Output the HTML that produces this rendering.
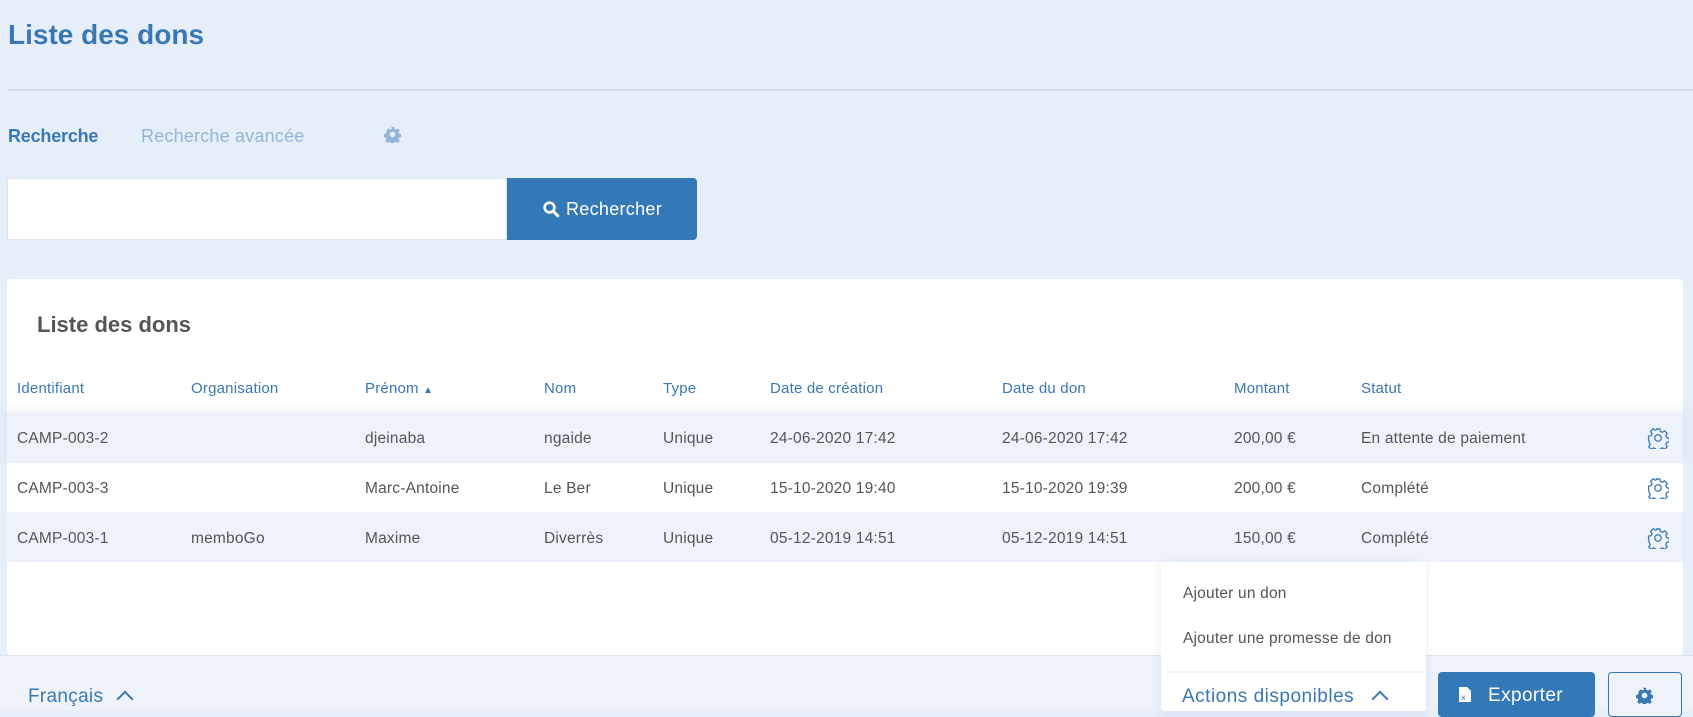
<!DOCTYPE html>
<html><head><meta charset="utf-8"><style>
*{box-sizing:border-box;margin:0;padding:0}
body{width:1693px;height:711px;overflow:hidden;background:#e6eef9;font-family:"Liberation Sans",sans-serif;position:relative;color:#555}
.a{position:absolute;white-space:nowrap}
h1{position:absolute;left:8px;top:19px;font-size:28px;font-weight:bold;color:#3a78b5;letter-spacing:0px}
.hr{position:absolute;left:8px;right:0;top:89px;height:2px;background:#d5dde8}
.tab{font-size:18px;top:126px}
.inp{left:7px;top:178px;width:500px;height:62px;background:#fff;border:1px solid #dde4ee}
.btn{left:507px;top:178px;width:190px;height:62px;background:#3379b7;border-radius:0 4px 4px 0;color:#fff;font-size:18px;display:flex;align-items:center;justify-content:center;gap:6px;letter-spacing:.3px}
.card{left:7px;top:279px;width:1676px;height:376px;background:#fff;border-radius:4px}
.th{top:380px;font-size:15px;color:#3a78b5;letter-spacing:.2px}
.row{position:absolute;left:7px;width:1676px;height:50px}
.td{font-size:15.5px;color:#555;letter-spacing:.2px}
.foot{left:0;top:655px;width:1693px;height:56px;background:#eef3fa;border-top:1px solid #dde4ee}
</style></head><body>
<h1>Liste des dons</h1>
<div class="hr"></div>
<div class="a tab" style="left:8px;color:#3a78b5;font-weight:bold;letter-spacing:-0.2px">Recherche</div>
<div class="a tab" style="left:141px;color:#93b5d9;letter-spacing:.2px">Recherche avancée</div>
<svg class="a" style="left:384px;top:126px" width="17" height="17" viewBox="0 0 24 24"><path fill="#93b5d9" d="M10 1h4l.6 3 2.3 1 2.6-1.7 2.8 2.8-1.7 2.6 1 2.3 3 .6v4l-3 .6-1 2.3 1.7 2.6-2.8 2.8-2.6-1.7-2.3 1-.6 3h-4l-.6-3-2.3-1-2.6 1.7-2.8-2.8 1.7-2.6-1-2.300-3-.6v-4l3-.6 1-2.3L3.7 6.1l2.8-2.8 2.6 1.7 2.3-1zM12 8a4 4 0 100 8 4 4 0 000-8z"/></svg>
<div class="a inp"></div>
<div class="a btn"><svg width="18" height="18" viewBox="0 0 24 24"><circle cx="10" cy="10" r="6.5" fill="none" stroke="#fff" stroke-width="3.5"/><path d="M15 15l6 6" stroke="#fff" stroke-width="4" stroke-linecap="round"/></svg>Rechercher</div>
<div class="a card"></div>
<div class="a" style="left:37px;top:312px;font-size:22px;font-weight:bold;color:#555">Liste des dons</div>
<div class="a th" style="left:17px">Identifiant</div>
<div class="a th" style="left:191px">Organisation</div>
<div class="a th" style="left:365px">Prénom <span style="font-size:10px">▲</span></div>
<div class="a th" style="left:544px">Nom</div>
<div class="a th" style="left:663px">Type</div>
<div class="a th" style="left:770px">Date de création</div>
<div class="a th" style="left:1002px">Date du don</div>
<div class="a th" style="left:1234px">Montant</div>
<div class="a th" style="left:1361px">Statut</div>
<div class="row" style="top:413px;background:#eef3fb;box-shadow:0 -4px 8px rgba(120,150,200,.12)"></div>
<div class="row" style="top:463px;background:#fff"></div>
<div class="row" style="top:512px;background:#eef3fb"></div>
<div class="a td" style="left:17px;top:430px">CAMP-003-2</div><div class="a td" style="left:365px;top:430px">djeinaba</div><div class="a td" style="left:544px;top:430px">ngaide</div><div class="a td" style="left:663px;top:430px">Unique</div><div class="a td" style="left:770px;top:430px">24-06-2020 17:42</div><div class="a td" style="left:1002px;top:430px">24-06-2020 17:42</div><div class="a td" style="left:1234px;top:430px">200,00 €</div><div class="a td" style="left:1361px;top:430px">En attente de paiement</div>
<div class="a td" style="left:17px;top:480px">CAMP-003-3</div><div class="a td" style="left:365px;top:480px">Marc-Antoine</div><div class="a td" style="left:544px;top:480px">Le Ber</div><div class="a td" style="left:663px;top:480px">Unique</div><div class="a td" style="left:770px;top:480px">15-10-2020 19:40</div><div class="a td" style="left:1002px;top:480px">15-10-2020 19:39</div><div class="a td" style="left:1234px;top:480px">200,00 €</div><div class="a td" style="left:1361px;top:480px">Complété</div>
<div class="a td" style="left:17px;top:530px">CAMP-003-1</div><div class="a td" style="left:191px;top:530px">memboGo</div><div class="a td" style="left:365px;top:530px">Maxime</div><div class="a td" style="left:544px;top:530px">Diverrès</div><div class="a td" style="left:663px;top:530px">Unique</div><div class="a td" style="left:770px;top:530px">05-12-2019 14:51</div><div class="a td" style="left:1002px;top:530px">05-12-2019 14:51</div><div class="a td" style="left:1234px;top:530px">150,00 €</div><div class="a td" style="left:1361px;top:530px">Complété</div>
<svg class="a" style="left:1647px;top:427px" width="22" height="22" viewBox="0 0 24 24"><path fill="none" stroke="#3a78b5" stroke-width="1.4" d="M10 2h4l.6 2.8 2.3 1 2.4-1.6 2.8 2.8-1.6 2.4 1 2.3 2.8.6v4l-2.8.6-1 2.3 1.6 2.4-2.8 2.8-2.4-1.6-2.3 1-.6 2.8h-4l-.6-2.8-2.3-1-2.4 1.6-2.8-2.8 1.6-2.4-1-2.3L1.7 14v-4l2.8-.6 1-2.3L3.9 4.7l2.8-2.8 2.4 1.6 2.3-1z"/><circle cx="12" cy="12" r="3.5" fill="none" stroke="#3a78b5" stroke-width="1.4"/></svg>
<svg class="a" style="left:1647px;top:477px" width="22" height="22" viewBox="0 0 24 24"><path fill="none" stroke="#3a78b5" stroke-width="1.4" d="M10 2h4l.6 2.8 2.3 1 2.4-1.6 2.8 2.8-1.6 2.4 1 2.3 2.8.6v4l-2.8.6-1 2.3 1.6 2.4-2.8 2.8-2.4-1.6-2.3 1-.6 2.8h-4l-.6-2.8-2.3-1-2.4 1.6-2.8-2.8 1.6-2.4-1-2.3L1.7 14v-4l2.8-.6 1-2.3L3.9 4.7l2.8-2.8 2.4 1.6 2.3-1z"/><circle cx="12" cy="12" r="3.5" fill="none" stroke="#3a78b5" stroke-width="1.4"/></svg>
<svg class="a" style="left:1647px;top:527px" width="22" height="22" viewBox="0 0 24 24"><path fill="none" stroke="#3a78b5" stroke-width="1.4" d="M10 2h4l.6 2.8 2.3 1 2.4-1.6 2.8 2.8-1.6 2.4 1 2.3 2.8.6v4l-2.8.6-1 2.3 1.6 2.4-2.8 2.8-2.4-1.6-2.3 1-.6 2.8h-4l-.6-2.8-2.3-1-2.4 1.6-2.8-2.8 1.6-2.4-1-2.3L1.7 14v-4l2.8-.6 1-2.3L3.9 4.7l2.8-2.8 2.4 1.6 2.3-1z"/><circle cx="12" cy="12" r="3.5" fill="none" stroke="#3a78b5" stroke-width="1.4"/></svg>
<div class="a foot"></div>
<div class="a" style="left:28px;top:686px;font-size:19px;color:#3a78b5;letter-spacing:.3px">Français <span style="display:inline-block;width:12px;height:12px;border-left:2px solid #3a78b5;border-top:2px solid #3a78b5;transform:rotate(45deg);margin-left:10px;position:relative;top:3px"></span></div>
<div class="a" style="left:1161px;top:562px;width:265px;height:149px;background:#fff;border-radius:4px;box-shadow:0 2px 10px rgba(100,130,180,.15)"></div>
<div class="a" style="left:1167px;top:671px;width:259px;height:2px;background:#eef2f8"></div>
<div class="a td" style="left:1183px;top:585px">Ajouter un don</div>
<div class="a td" style="left:1183px;top:630px">Ajouter une promesse de don</div>
<div class="a" style="left:1182px;top:686px;font-size:19px;color:#3a78b5;letter-spacing:.5px">Actions disponibles <span style="display:inline-block;width:12px;height:12px;border-left:2px solid #3a78b5;border-top:2px solid #3a78b5;transform:rotate(45deg);margin-left:14px;position:relative;top:3px"></span></div>
<div class="a" style="left:1438px;top:672px;width:157px;height:45px;background:#3379b7;border-radius:4px;color:#fff;font-size:19px;padding:13px 0 0 20px;letter-spacing:.4px"><svg width="14" height="17" viewBox="0 0 14 17" style="vertical-align:-2px;margin-right:16px"><path d="M1 1h8l4 4v11H1z" fill="#fff"/><text x="3.5" y="14" font-size="8" fill="#3379b7" font-family="Liberation Sans">x</text></svg>Exporter</div>
<div class="a" style="left:1608px;top:672px;width:74px;height:45px;border:1px solid #3a78b5;border-radius:4px;background:#eef3fa"></div>
<svg class="a" style="left:1636px;top:687px" width="17" height="17" viewBox="0 0 24 24"><path fill="#3a78b5" d="M10 1h4l.6 3 2.3 1 2.6-1.7 2.8 2.8-1.7 2.6 1 2.3 3 .6v4l-3 .6-1 2.3 1.7 2.6-2.8 2.8-2.6-1.7-2.3 1-.6 3h-4l-.6-3-2.3-1-2.6 1.7-2.8-2.8 1.7-2.6-1-2.3-3-.6v-4l3-.6 1-2.3L3.7 6.1l2.8-2.8 2.6 1.7 2.3-1zM12 8a4 4 0 100 8 4 4 0 000-8z"/></svg>
</body></html>
